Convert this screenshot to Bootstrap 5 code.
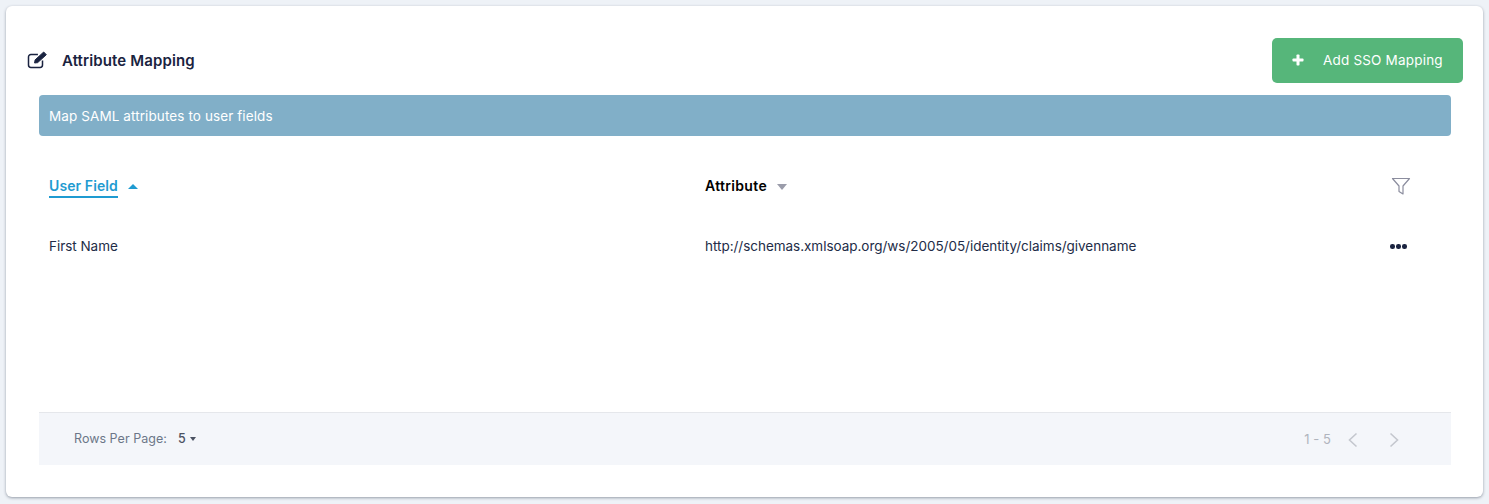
<!DOCTYPE html>
<html lang="en">
<head>
<meta charset="utf-8">
<title>Attribute Mapping</title>
<link href="https://cdn.jsdelivr.net/npm/bootstrap@5.3.0/dist/css/bootstrap.min.css" rel="stylesheet">
<style>
html,body{height:504px;overflow:hidden}
body{background:#eef2f7;font-family:Inter,"Liberation Sans",sans-serif;font-size:13.5px;color:#1a2340;padding:6px 6px 7px 6px}
.panel{height:491px;background:#fff;border-radius:6px;box-shadow:0 1px 3px rgba(40,50,70,.45);display:flex;flex-direction:column;padding-bottom:32px}
.head{height:89px;padding:32px 20px 0 21px}
.ttl{font-size:15px;font-weight:600;color:#1a2340;margin:0 0 0 14px;letter-spacing:.12px}
.ttlicon{width:21px;height:20px;margin-top:-2px}
.addbtn{width:191px;height:45px;background:#56b67a;color:#fff;border:0;border-radius:5px;font-size:13.5px;font-weight:400;padding:0 20px;letter-spacing:.19px}
.addbtn:hover{background:#56b67a;color:#fff}
.addbtn svg{width:12px;height:12px;margin-right:19px;margin-top:-2px}
.body{padding:0 32px 0 33px;flex:1;display:flex;flex-direction:column}
.note{height:41px;background:#81afc8;color:#fff;border-radius:4px;padding:1px 10px 0;font-size:13.5px;letter-spacing:.1px;display:flex;align-items:center;margin:0}
.colrow{display:flex;align-items:center}
.c1{width:666px;padding-left:10px}
.c2{flex:1}
.c3{width:59px}
.thead{height:100px;font-weight:600;font-size:14px;color:#000;padding-bottom:2px}
.thead .c1,.thead .c3{margin-top:2px}
.sorted{color:#1f9bd1;border-bottom:2px solid #1f9bd1;line-height:19px;padding-bottom:1px;display:inline-block;letter-spacing:.1px}
.attr{letter-spacing:.33px}
.tri{display:inline-block;width:0;height:0;border-left:5px solid transparent;border-right:5px solid transparent;margin-left:10px;vertical-align:middle}
.up{border-bottom:5px solid #1f9bd1}
.down{border-top:6px solid #9a9caa}
.rowline{height:20px;font-size:13.5px;color:#222c47;padding-top:1px;letter-spacing:-.03px}
.filt{width:20px;height:20px;margin-left:-1px;display:block}
.dots{display:flex;gap:1.5px;margin-left:-2px}
.dots i{width:4.5px;height:4.5px;border-radius:50%;background:#1a2340;display:block}
.foot{margin-top:auto;height:53px;background:#f4f6fa;border-top:1px solid #e5e7eb;display:flex;align-items:center;padding:1px 50px 0 35px;font-size:12.5px;letter-spacing:.03px;color:#6c7688}
.rppval{color:#4b5262;font-weight:500;margin-left:11px;font-size:12.5px}
.caret{display:inline-block;width:0;height:0;border-left:3.5px solid transparent;border-right:3.5px solid transparent;border-top:4px solid #4b5262;margin-left:4px;vertical-align:2px}
.range{color:#b0b4bd;font-size:13px;margin-right:15px}
.chev{width:14px;height:18px;display:block}
</style>
</head>
<body>
<div class="panel">
  <div class="head d-flex justify-content-between align-items-start">
    <div class="d-flex align-items-center" style="height:45px">
      <svg class="ttlicon" viewBox="0 0 21 20" fill="none" stroke="#1a2340" stroke-width="1.5"><path d="M15.5 10.5v4.6a2.4 2.4 0 0 1-2.4 2.4H3.9a2.4 2.4 0 0 1-2.4-2.4V6.9a2.4 2.4 0 0 1 2.4-2.4h7"/><path d="M7.6 13l.5-3.1 8.6-7.9 2.6 2.7-8.6 7.9z" fill="#1a2340" stroke-width="1"/></svg>
      <h2 class="ttl">Attribute Mapping</h2>
    </div>
    <button class="btn addbtn d-flex align-items-center" type="button">
      <svg viewBox="0 0 12 12" fill="#fff"><rect x="4.5" y="0.5" width="3" height="11" rx=".8"/><rect x="0.5" y="4.5" width="11" height="3" rx=".8"/></svg>
      <span>Add SSO Mapping</span>
    </button>
  </div>
  <div class="body">
    <div class="note">Map SAML attributes to user fields</div>
    <div class="colrow thead">
      <div class="c1"><span class="sorted">User Field</span><span class="tri up"></span></div>
      <div class="c2"><span class="attr">Attribute</span><span class="tri down"></span></div>
      <div class="c3"><svg class="filt" viewBox="0 0 20 20" fill="none" stroke="#8b8d9e" stroke-width="1.2" stroke-linejoin="round"><path d="M1.5 2.5h17l-6.5 7.5v8l-4-2.5v-5.5z"/></svg></div>
    </div>
    <div class="colrow rowline">
      <div class="c1">First Name</div>
      <div class="c2">http://schemas.xmlsoap.org/ws/2005/05/identity/claims/givenname</div>
      <div class="c3"><div class="dots"><i></i><i></i><i></i></div></div>
    </div>
    <div class="foot">
      <span>Rows Per Page:</span><span class="rppval">5<span class="caret"></span></span>
      <div class="ms-auto d-flex align-items-center">
        <span class="range">1 - 5</span>
        <svg class="chev" viewBox="0 0 14 18" fill="none" stroke="#c4c7ce" stroke-width="1.6"><path d="M10.5 2.5 3.5 9l7 6.5"/></svg>
        <svg class="chev" style="margin-left:27px" viewBox="0 0 14 18" fill="none" stroke="#c4c7ce" stroke-width="1.6"><path d="M3.5 2.5 10.5 9l-7 6.5"/></svg>
      </div>
    </div>
  </div>
</div>
<script src="https://cdn.jsdelivr.net/npm/bootstrap@5.3.0/dist/js/bootstrap.bundle.min.js"></script>
</body>
</html>
